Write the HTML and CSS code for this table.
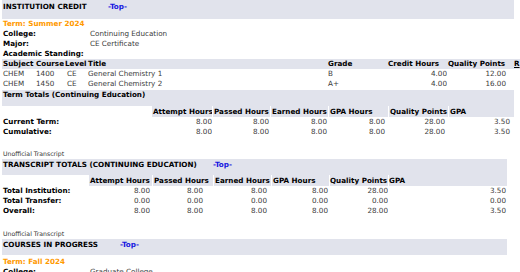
FILE: index.html
```
<!DOCTYPE html>
<html lang="en">
<head>
<meta charset="utf-8">
<title>Academic Transcript</title>
<link rel="stylesheet" href="styles.css">
</head>
<body>
<div class="page">
  <div class="bar bar-first w512"><span class="bar-title bt1">INSTITUTION CREDIT</span><a class="top" href="#">-Top-</a></div>
  <div class="term">Term: Summer 2024</div>
  <table class="info">
    <tr><th>College:</th><td>Continuing Education</td></tr>
    <tr><th>Major:</th><td>CE Certificate</td></tr>
    <tr><th>Academic Standing:</th><td></td></tr>
  </table>
  <table class="courses">
    <colgroup>
      <col class="c33"><col class="c29"><col class="c23"><col class="c240"><col class="c60"><col class="c60"><col class="c66"><col class="c20">
    </colgroup>
    <tr class="head"><th>Subject</th><th>Course</th><th>Level</th><th>Title</th><th>Grade</th><th>Credit Hours</th><th>Quality Points</th><th><span class="abbr">R</span></th></tr>
    <tr><td>CHEM</td><td>1400</td><td class="lvl">CE</td><td>General Chemistry 1</td><td>B</td><td class="num">4.00</td><td class="num">12.00</td><td></td></tr>
    <tr><td>CHEM</td><td>1450</td><td class="lvl">CE</td><td>General Chemistry 2</td><td>A+</td><td class="num">4.00</td><td class="num">16.00</td><td></td></tr>
  </table>
  <div class="bar bar-sub w512">Term Totals (Continuing Education)</div>
  <table class="totals term-totals">
    <colgroup>
      <col class="c149"><col class="c61"><col class="c58"><col class="c58"><col class="c60"><col class="c60"><col class="c66">
    </colgroup>
    <tr class="head"><td class="blank"></td><th>Attempt Hours</th><th>Passed Hours</th><th>Earned Hours</th><th>GPA Hours</th><th>Quality Points</th><th>GPA</th></tr>
    <tr><th class="label">Current Term:</th><td>8.00</td><td>8.00</td><td>8.00</td><td>8.00</td><td>28.00</td><td>3.50</td></tr>
    <tr><th class="label">Cumulative:</th><td>8.00</td><td>8.00</td><td>8.00</td><td>8.00</td><td>28.00</td><td>3.50</td></tr>
  </table>

  <div class="note note-first">Unofficial Transcript</div>
  <div class="bar bar-sec w505"><span class="bar-title bt3">TRANSCRIPT TOTALS (CONTINUING EDUCATION)</span><a class="top" href="#">-Top-</a></div>
  <table class="totals all-totals">
    <colgroup>
      <col class="c86"><col class="c64"><col class="c61"><col class="c58"><col class="c58"><col class="c59"><col class="c119">
    </colgroup>
    <tr class="head"><td class="blank"></td><th>Attempt Hours</th><th>Passed Hours</th><th>Earned Hours</th><th>GPA Hours</th><th>Quality Points</th><th>GPA</th></tr>
    <tr><th class="label">Total Institution:</th><td>8.00</td><td>8.00</td><td>8.00</td><td>8.00</td><td>28.00</td><td>3.50</td></tr>
    <tr><th class="label">Total Transfer:</th><td>0.00</td><td>0.00</td><td>0.00</td><td>0.00</td><td>0.00</td><td>0.00</td></tr>
    <tr><th class="label">Overall:</th><td>8.00</td><td>8.00</td><td>8.00</td><td>8.00</td><td>28.00</td><td>3.50</td></tr>
  </table>

  <div class="note note-second">Unofficial Transcript</div>
  <div class="bar bar-sec w505"><span class="bar-title bt4">COURSES IN PROGRESS</span><a class="top" href="#">-Top-</a></div>
  <div class="term term-late">Term: Fall 2024</div>
  <table class="info">
    <tr><th>College:</th><td>Graduate College</td></tr>
  </table>
</div>
</body>
</html>
```
FILE: styles.css
```
html {
  overflow: hidden;
}
body {
  margin: 0;
  padding: 0;
  background: #ffffff;
  font-family: "DejaVu Sans", Verdana, sans-serif;
  font-size: 7.2px;
  line-height: 10px;
  color: #3a3a3a;
}
.page {
  padding-left: 2px;
}
.w512 { width: 511px; }
.w505 { width: 504px; }

/* section header bars */
.bar {
  background: #e1e3ec;
  color: #000;
  font-weight: bold;
  padding: 0 0 6px 1px;
  line-height: 10px;
  white-space: nowrap;
}
.bar-first {
  padding-top: 2px;
  padding-bottom: 7px;
}
.bar-sub {
  margin-top: 1px;
}
.bar-sec {
  padding-top: 1px;
  padding-bottom: 5px;
}
.bar-title {
  display: inline-block;
}
.bt1 { width: 105px; }
.bt3 { width: 210px; }
.bt4 { width: 117px; }
.top {
  color: #1414e0;
  text-decoration: none;
  font-weight: bold;
}

.term {
  color: #ff9900;
  font-weight: bold;
  padding-left: 1px;
  height: 10px;
}
.term-late {
  margin-top: 2px;
}

table {
  border-collapse: collapse;
  table-layout: fixed;
  border-spacing: 0;
}
th, td {
  padding: 0 0 0 1px;
  height: 10px;
  line-height: 10px;
  white-space: nowrap;
  overflow: hidden;
  text-align: left;
  vertical-align: middle;
}
th {
  color: #000;
  font-weight: bold;
}

.info th { width: 86px; }
.info td { padding-left: 1px; }

.courses { width: 531px; }
.head th {
  background: #e1e3ec;
}
.lvl { padding-left: 3px; }
.num { text-align: right; }
.courses td:nth-child(6) { padding-right: 0; }
.courses td:nth-child(7) { padding-right: 7px; }
.abbr {
  text-decoration: underline;
}

.c20 { width: 20px; }
.c23 { width: 23px; }
.c29 { width: 29px; }
.c33 { width: 33px; }
.c58 { width: 58px; }
.c59 { width: 59px; }
.c60 { width: 60px; }
.c61 { width: 61px; }
.c64 { width: 64px; }
.c66 { width: 66px; }
.c86 { width: 86px; }
.c119 { width: 119px; }
.c149 { width: 149px; }
.c240 { width: 240px; }

.totals .head th {
  box-shadow: inset 1px 0 0 #ffffff;
  padding-left: 2px;
}
.totals td {
  text-align: right;
}
.totals .head td.blank {
  background: transparent;
}
.term-totals { width: 512px; }
.term-totals .head { height: 11px; }
.term-totals td:nth-child(2) { padding-right: 0; }
.term-totals td:nth-child(3) { padding-right: 1px; }
.term-totals td:nth-child(4) { padding-right: 1px; }
.term-totals td:nth-child(5) { padding-right: 3px; }
.term-totals td:nth-child(6) { padding-right: 3px; }
.term-totals td:nth-child(7) { padding-right: 4px; }

.all-totals { width: 505px; }
.all-totals .head { height: 11px; }
.all-totals td:nth-child(2) { padding-right: 2px; }
.all-totals td:nth-child(3) { padding-right: 10px; }
.all-totals td:nth-child(4) { padding-right: 4px; }
.all-totals td:nth-child(5) { padding-right: 1px; }
.all-totals td:nth-child(6) { padding-right: 0; }
.all-totals td:nth-child(7) { padding-right: 1px; }
.all-totals .head th:nth-child(6),
.all-totals .head th:nth-child(7) { padding-left: 1px; }

.note {
  font-size: 6.2px;
  line-height: 10px;
  height: 10px;
  color: #333;
  padding-left: 1px;
}
.note-first { margin-top: 12px; }
.note-second { margin-top: 13px; }
```
